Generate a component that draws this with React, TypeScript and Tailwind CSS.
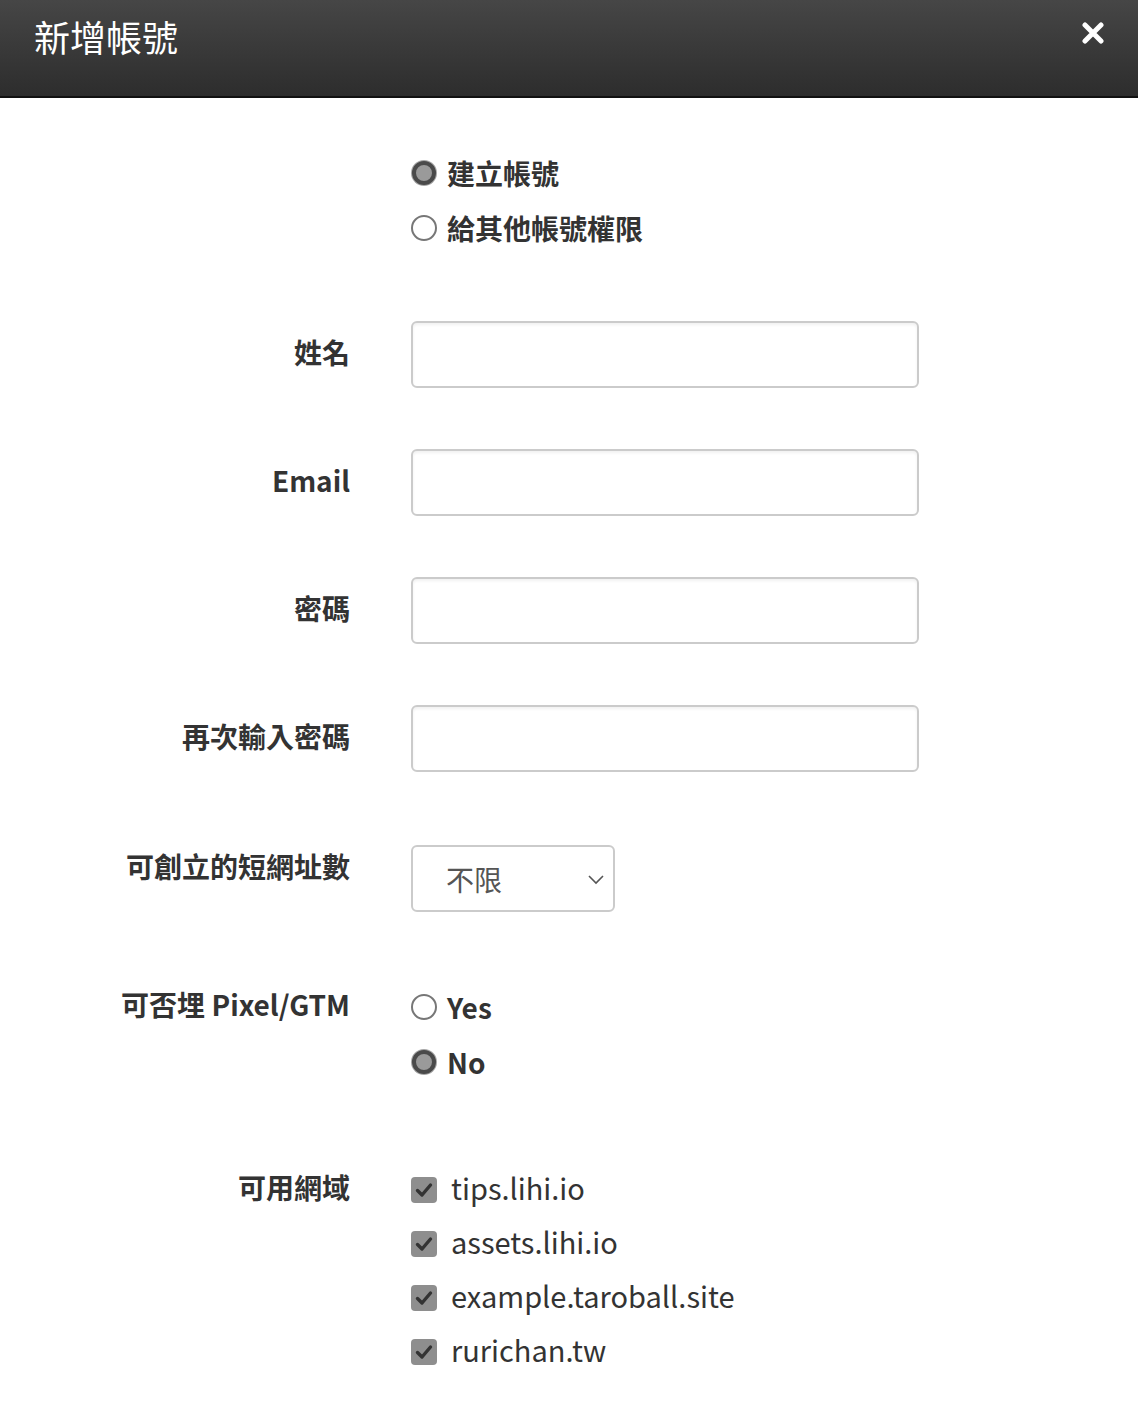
import React from "react";

const FONT = "font-['Noto_Sans_CJK_TC','Noto_Sans',sans-serif]";

const Radio = ({ checked, label }: { checked?: boolean; label: string }) => (
  <div className="flex items-center h-[55px]">
    {checked ? (
      <span className="w-[26px] h-[26px] rounded-full bg-[#a5a5a5] p-[1px] flex items-center justify-center">
        <span className="w-[24px] h-[24px] rounded-full border-[4px] border-[#4a4a4a] bg-[#9a9a9a]" />
      </span>
    ) : (
      <span className="w-[26px] h-[26px] rounded-full border-2 border-[#777] bg-white" />
    )}
    <span className="ml-[10px] text-[28px] leading-[40px] font-bold text-[#333]">{label}</span>
  </div>
);

const Check = ({ label }: { label: string }) => (
  <div className="flex items-center h-[54px]">
    <span className="w-[26px] h-[26px] rounded-[4px] bg-[#8e8e8e] flex items-center justify-center">
      <svg width="20" height="20" viewBox="0 0 20 20">
        <path d="M3.5 10.5 L8 15 L16.5 5" fill="none" stroke="#333" strokeWidth="3.4" strokeLinecap="round" strokeLinejoin="round" />
      </svg>
    </span>
    <span className="ml-[14px] pb-[6px] text-[29px] leading-[40px] text-[#333]">{label}</span>
  </div>
);

const Row = ({
  label,
  children,
  top,
  labelClass = "",
}: {
  label: string;
  children: React.ReactNode;
  top?: boolean;
  labelClass?: string;
}) => (
  <div className={`flex ${top ? "items-start" : "items-center"}`}>
    <div className={`w-[350px] text-right text-[28px] leading-[40px] font-bold text-[#333] shrink-0 ${labelClass}`}>{label}</div>
    <div className="ml-[61px]">{children}</div>
  </div>
);

const Input = () => (
  <div className="w-[508px] h-[67px] rounded-[6px] border-2 border-[#cbcbcb] bg-white shadow-[inset_0_2px_3px_rgba(0,0,0,0.06)]" />
);

export default function App() {
  return (
    <div className={`w-[1138px] h-[1407px] bg-white ${FONT}`}>
      <div className="h-[98px] bg-gradient-to-b from-[#464646] to-[#2d2d2d] border-b-2 border-[#111] flex items-start justify-between">
        <h1 className="ml-[34px] mt-[10px] text-[36px] leading-[52px] text-white">新增帳號</h1>
        <svg className="mt-[22px] mr-[34px]" width="22" height="22" viewBox="0 0 22 22">
          <path d="M3 3 L19 19 M19 3 L3 19" stroke="white" strokeWidth="5" strokeLinecap="round" />
        </svg>
      </div>

      <div className="pt-[47px]">
        <div className="ml-[411px]">
          <Radio checked label="建立帳號" />
          <Radio label="給其他帳號權限" />
        </div>

        <div className="mt-[66px] flex flex-col gap-[61px]">
          <Row label="姓名" labelClass="pb-[5px]"><Input /></Row>
          <Row label="Email" labelClass="pb-[5px]"><Input /></Row>
          <Row label="密碼" labelClass="pb-[5px]"><Input /></Row>
          <Row label="再次輸入密碼" labelClass="pb-[5px]"><Input /></Row>
          <div className="mt-[12px]">
            <Row label="可創立的短網址數" top labelClass="mt-[1px]">
              <div className="w-[204px] h-[67px] rounded-[6px] border-2 border-[#cbcbcb] bg-white flex items-center justify-between pl-[33px] pr-[8px]">
                <span className="text-[28px] text-[#555]">不限</span>
                <svg width="18" height="12" viewBox="0 0 18 12">
                  <path d="M2 3 L9 10 L16 3" fill="none" stroke="#555" strokeWidth="1.6" />
                </svg>
              </div>
            </Row>
          </div>
        </div>

        <div className="mt-[72px]">
          <Row label="可否埋 Pixel/GTM" top>
            <div className="-mt-[5px]">
              <Radio label="Yes" />
              <Radio checked label="No" />
            </div>
          </Row>
        </div>

        <div className="mt-[78px]">
          <Row label="可用網域" top>
            <div className="-mt-[4px]">
              <Check label="tips.lihi.io" />
              <Check label="assets.lihi.io" />
              <Check label="example.taroball.site" />
              <Check label="rurichan.tw" />
            </div>
          </Row>
        </div>
      </div>
    </div>
  );
}
